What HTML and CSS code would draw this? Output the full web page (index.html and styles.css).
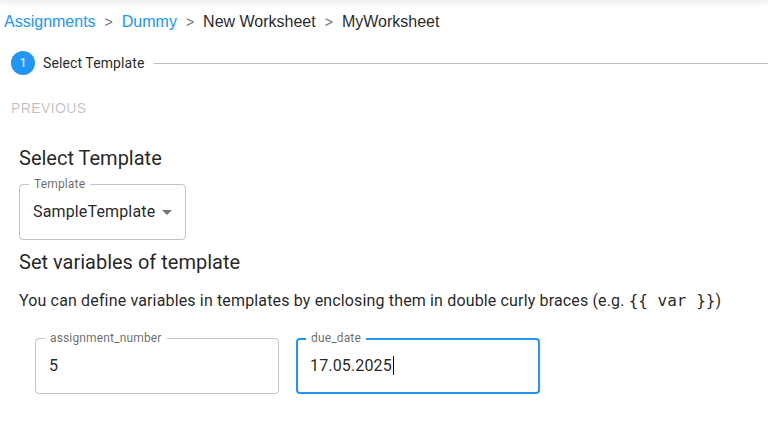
FILE: index.html
```html
<!DOCTYPE html>
<html>
<head>
<meta charset="utf-8">
<link rel="stylesheet" href="styles.css">
</head>
<body>
<div class="topshadow"></div>
<nav class="crumbs">
  <a class="link">Assignments</a><span class="sep">&gt;</span>
  <a class="link">Dummy</a><span class="sep">&gt;</span>
  <span class="cur">New Worksheet</span><span class="sep">&gt;</span>
  <span class="cur">MyWorksheet</span>
</nav>
<div class="stepper">
  <div class="step-icon">1</div>
  <div class="step-label">Select Template</div>
  <div class="step-line"></div>
</div>
<div class="actions"><button class="btn-prev">Previous</button></div>
<main class="content">
  <h2 class="heading">Select Template</h2>
  <div class="select">
    <span class="float-label">Template</span>
    <span class="select-value">SampleTemplate</span>
    <svg class="arrow" width="24" height="24" viewBox="0 0 24 24"><path d="M7 10l5 5 5-5z" fill="rgba(0,0,0,0.54)"/></svg>
  </div>
  <h2 class="heading h2b">Set variables of template</h2>
  <p class="desc">You can define variables in templates by enclosing them in double curly braces (e.g. <code>{{ var }}</code>)</p>
  <div class="fields">
    <div class="field">
      <span class="float-label">assignment_number</span>
      <span class="field-value">5</span>
    </div>
    <div class="field focused">
      <span class="float-label">due_date</span>
      <span class="field-value">17.05.2025<span class="caret"></span></span>
    </div>
  </div>
</main>
</body>
</html>
```
FILE: styles.css
```css
html, body {
  margin: 0;
  padding: 0;
  background: #fff;
  width: 768px;
  height: 428px;
  overflow: hidden;
  font-family: Roboto, "Liberation Sans", sans-serif;
  color: rgba(0,0,0,0.87);
}
.topshadow {
  height: 0;
  box-shadow: 0 0 6px 2px rgba(0,0,0,0.12);
}
.crumbs {
  display: flex;
  align-items: center;
  padding: 10px 0 0 4px;
  height: 24px;
  font-family: "Liberation Sans", Arial, sans-serif;
  font-size: 16px;
  line-height: 24px;
}
.link { color: #2196f3; }
.cur { color: rgba(0,0,0,0.87); }
.sep {
  color: #757575;
  font-size: 14px;
  margin: 0 9px;
}
.stepper {
  display: flex;
  align-items: center;
  margin-top: 17px;
  padding-left: 11px;
  height: 24px;
}
.step-icon {
  width: 24px;
  height: 24px;
  border-radius: 50%;
  background: #2196f3;
  color: #fff;
  font-size: 12px;
  display: flex;
  align-items: center;
  justify-content: center;
}
.step-label {
  margin-left: 8px;
  font-size: 14px;
  line-height: 20px;
  letter-spacing: 0.1px;
}
.step-line {
  flex: 1;
  margin-left: 10px;
  border-top: 1px solid #bdbdbd;
}
.actions {
  margin-top: 15px;
  padding-left: 3px;
}
.btn-prev {
  background: none;
  border: 0;
  font-family: "Liberation Sans", Arial, sans-serif;
  font-size: 14px;
  font-weight: 400;
  text-transform: uppercase;
  letter-spacing: 0.4px;
  color: rgba(0,0,0,0.26);
  padding: 6px 8px;
  line-height: 24.5px;
}
.content {
  padding-left: 19px;
}
.heading {
  margin: 15px 0 0;
  font-size: 20px;
  font-weight: 400;
  line-height: 32px;
}
.h2b { margin-top: 6px; }
.select {
  position: relative;
  margin-top: 10px;
  display: inline-flex;
  align-items: center;
  height: 54px;
  padding: 0 8px 0 13px;
  border: 1px solid rgba(0,0,0,0.23);
  border-radius: 4px;
  font-size: 16px;
  letter-spacing: 0.15px;
}
.select-value { line-height: 23px; }
.arrow { margin-left: 0; margin-right: -2px; }
.float-label {
  position: absolute;
  top: -8px;
  left: 9px;
  padding: 0 5px;
  background: #fff;
  font-size: 12px;
  line-height: 14px;
  letter-spacing: 0.15px;
  color: rgba(0,0,0,0.6);
}
.desc {
  margin: 11px 0 0;
  font-size: 16px;
  line-height: 24px;
  letter-spacing: 0.15px;
}
code {
  font-family: "DejaVu Sans Mono", monospace;
  font-size: 16px;
  letter-spacing: 0;
}
.fields {
  display: flex;
  gap: 17px;
  margin-top: 25px;
  margin-left: 16px;
}
.field {
  position: relative;
  box-sizing: border-box;
  width: 244px;
  height: 56px;
  border: 1px solid rgba(0,0,0,0.23);
  border-radius: 4px;
  padding: 0 13px;
  display: flex;
  align-items: center;
  font-size: 16px;
  letter-spacing: 0.15px;
}
.field.focused {
  border: 2px solid #2196f3;
  padding: 0 12px;
}
.field.focused .float-label { top: -9px; left: 8px; }
.field-value { line-height: 23px; display: inline-flex; align-items: center; }
.caret {
  display: inline-block;
  width: 1px;
  height: 19px;
  background: #000;
  margin-left: 1px;
}
```
